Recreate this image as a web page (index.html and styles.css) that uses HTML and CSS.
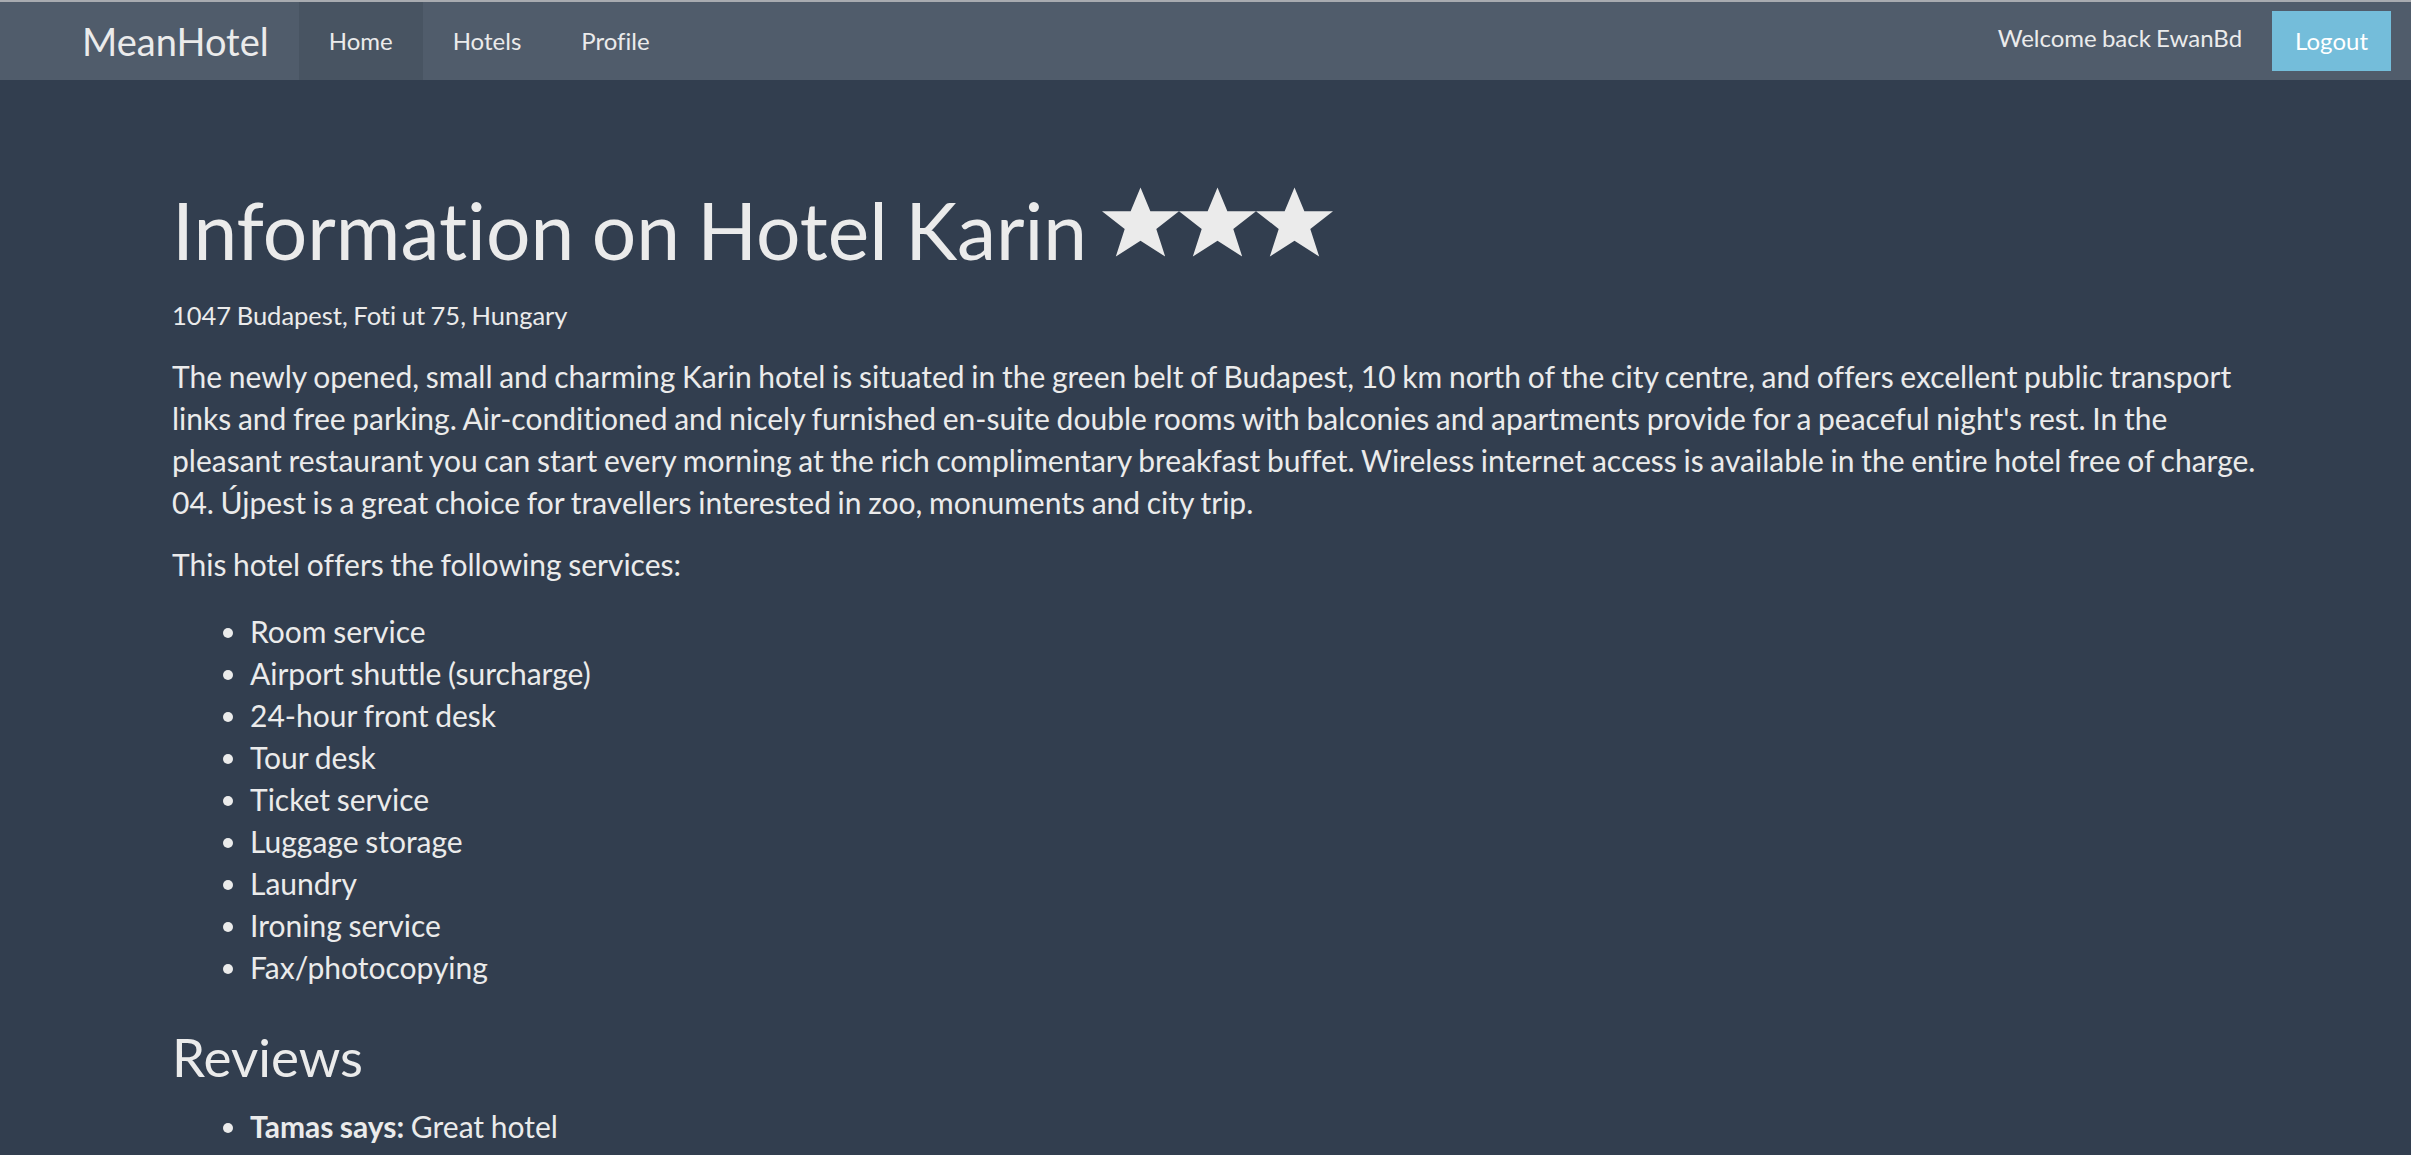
FILE: index.html
```html
<!DOCTYPE html>
<html lang="en">
<head>
<meta charset="utf-8">
<title>MeanHotel</title>
<link rel="stylesheet" href="styles.css">
</head>
<body>
<nav class="navbar">
  <a class="brand" href="#">MeanHotel</a>
  <ul class="nav-links">
    <li class="active"><a href="#">Home</a></li>
    <li><a href="#">Hotels</a></li>
    <li><a href="#">Profile</a></li>
  </ul>
  <div class="nav-right">
    <span class="welcome">Welcome back EwanBd</span>
    <button class="logout">Logout</button>
  </div>
</nav>
<main class="content">
  <h1 class="title">Information on Hotel Karin<span class="stars"><svg class="star" viewBox="0 0 78 70"><polygon points="39,0 49,24 78,24 55,42 64,70 39,54 14,70 23,42 0,24 29,24"/></svg><svg class="star" viewBox="0 0 78 70"><polygon points="39,0 49,24 78,24 55,42 64,70 39,54 14,70 23,42 0,24 29,24"/></svg><svg class="star" viewBox="0 0 78 70"><polygon points="39,0 49,24 78,24 55,42 64,70 39,54 14,70 23,42 0,24 29,24"/></svg></span></h1>
  <p class="address">1047 Budapest, Foti ut 75, Hungary</p>
  <p class="text">The newly opened, small and charming Karin hotel is situated in the green belt of Budapest, 10 km north of the city centre, and offers excellent public transport links and free parking. Air-conditioned and nicely furnished en-suite double rooms with balconies and apartments provide for a peaceful night's rest. In the pleasant restaurant you can start every morning at the rich complimentary breakfast buffet. Wireless internet access is available in the entire hotel free of charge. 04. Újpest is a great choice for travellers interested in zoo, monuments and city trip.</p>
  <p class="text">This hotel offers the following services:</p>
  <ul class="list services">
    <li>Room service</li>
    <li>Airport shuttle (surcharge)</li>
    <li>24-hour front desk</li>
    <li>Tour desk</li>
    <li>Ticket service</li>
    <li>Luggage storage</li>
    <li>Laundry</li>
    <li>Ironing service</li>
    <li>Fax/photocopying</li>
  </ul>
  <h2 class="reviews-title">Reviews</h2>
  <ul class="list">
    <li><strong>Tamas says:</strong> Great hotel</li>
  </ul>
</main>
</body>
</html>
```

FILE: styles.css
```css
html, body {
  margin: 0;
  padding: 0;
}
body {
  background: #323e4f;
  color: #ebebeb;
  font-family: Lato, "Open Sans", sans-serif;
  font-size: 30px;
  line-height: 42px;
  word-spacing: -1px;
  font-variant-ligatures: none;
  font-feature-settings: "liga" 0;
  overflow: hidden;
  height: 1155px;
}
.navbar {
  display: flex;
  align-items: stretch;
  height: 78px;
  border-top: 2px solid #a8abb0;
  background: #505c6b;
  padding: 0 20px 0 52px;
}
.brand {
  color: #ebebeb;
  text-decoration: none;
  font-size: 38px;
  line-height: 78px;
  padding: 0 30px;
}
.nav-links {
  display: flex;
  list-style: none;
  margin: 0;
  padding: 0;
}
.nav-links li a {
  display: block;
  color: #ebebeb;
  text-decoration: none;
  font-size: 24px;
  line-height: 78px;
  padding: 0 30px;
}
.nav-links li.active a {
  background: #485462;
}
.nav-right {
  margin-left: auto;
  display: flex;
  align-items: flex-start;
  gap: 30px;
}
.welcome {
  font-size: 24px;
  line-height: 36px;
  margin-top: 18px;
}
.logout {
  margin-top: 9px;
  height: 60px;
  border: none;
  background: #74bdda;
  color: #ffffff;
  font-family: Lato, "Open Sans", sans-serif;
  font-size: 24px;
  line-height: 36px;
  padding: 0 23px;
}
.content {
  padding: 106px 130px 0 172px;
}
.title {
  font-size: 78.5px;
  font-weight: 400;
  line-height: 88px;
  word-spacing: -2.7px;
  margin: 0;
}
.stars {
  display: inline-flex;
  vertical-align: top;
  margin-top: 1px;
  margin-left: 15px;
}
.star {
  width: 77px;
  height: 70px;
  fill: #ebebeb;
  display: block;
}
.address {
  font-size: 25.5px;
  line-height: 36px;
  margin: 23px 0 22px;
}
.text {
  margin: 0 0 20px;
}
.list {
  margin: 0;
  padding-left: 78px;
}
.services {
  margin-top: 25px;
}
.reviews-title {
  font-size: 53px;
  font-weight: 400;
  line-height: 58px;
  margin: 40px 0 19px;
}
strong {
  font-weight: 700;
}
```
